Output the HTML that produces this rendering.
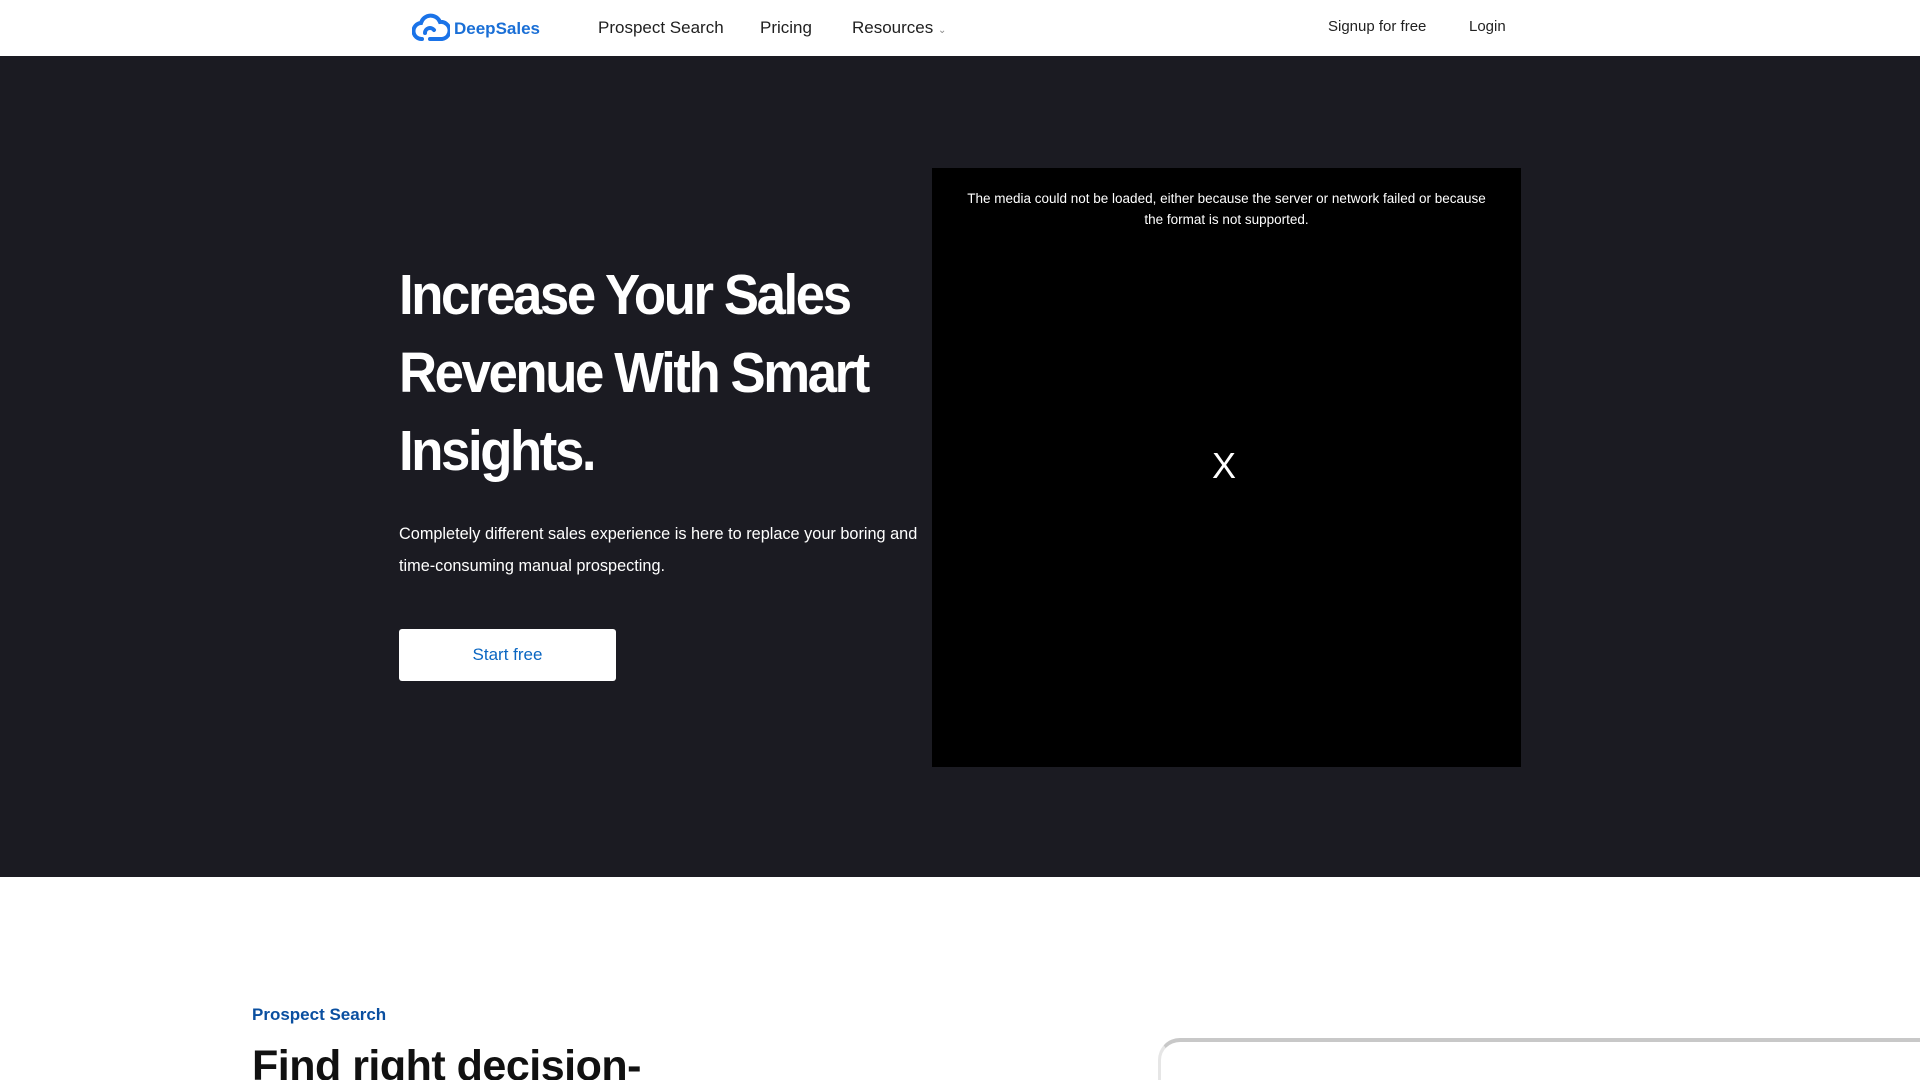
<!DOCTYPE html>
<html style="width:1920px;height:1080px;overflow:hidden"><head><meta charset="utf-8"><style>
*{margin:0;padding:0;box-sizing:border-box}
body{width:1920px;height:1080px;overflow:hidden;background:#fff;font-family:"Liberation Sans",sans-serif;position:relative}
.abs{position:absolute;white-space:nowrap}
nav{position:absolute;left:0;top:0;width:1920px;height:56px;background:#fff}
.hero{position:absolute;left:0;top:56px;width:1920px;height:821px;background:#1b1b22}
.nl{font-size:17px;color:#1f1f1f;top:18px}
h1{position:absolute;left:399px;top:256px;color:#fff;font-size:57px;line-height:78px;letter-spacing:-2.6px;font-weight:bold;transform:scaleX(.925);transform-origin:left top;white-space:nowrap}
</style></head><body>
<nav>
<svg class="abs" style="left:412px;top:13px" width="38" height="30" viewBox="0 0 38 30"><path d="M10 26 A8 8 0 0 1 9 10 A10 10 0 0 1 28 9 A8 8 0 0 1 30 26 L18 26" fill="none" stroke="#1a73e8" stroke-width="4" stroke-linecap="round"/><path d="M13 20 A5 5 0 0 1 22 17" fill="none" stroke="#1a73e8" stroke-width="4" stroke-linecap="round"/></svg>
<div class="abs" style="left:454px;top:19px;font-size:17px;font-weight:bold;color:#1a6fd6">DeepSales</div>
<div class="abs nl" style="left:598px">Prospect Search</div>
<div class="abs nl" style="left:760px">Pricing</div>
<div class="abs nl" style="left:852px">Resources <span style="font-size:10px;color:#888">&#8964;</span></div>
<div class="abs" style="left:1328px;top:18px;font-size:15px;color:#222">Signup for free</div>
<div class="abs" style="left:1469px;top:18px;font-size:15px;color:#222">Login</div>
</nav>
<div class="hero"></div>
<h1>Increase Your Sales<br>Revenue With Smart<br>Insights.</h1>
<div class="abs" style="left:399px;top:518px;color:#fff;font-size:16.3px;line-height:32px">Completely different sales experience is here to replace your boring and<br>time-consuming manual prospecting.</div>
<div class="abs" style="left:399px;top:629px;width:217px;height:52px;background:#fff;border-radius:3px;color:#0a66c2;font-size:17px;line-height:52px;text-align:center">Start free</div>
<div class="abs" style="left:932px;top:168px;width:589px;height:599px;background:#000"></div>
<div class="abs" style="left:932px;top:188px;width:589px;text-align:center;color:#fff;font-size:13.5px;line-height:21px;white-space:normal;padding:0 24px">The media could not be loaded, either because the server or network failed or because the format is not supported.</div>
<div class="abs" style="left:1212px;top:445px;color:#fff;font-size:36px">X</div>
<div class="abs" style="left:252px;top:1005px;color:#0a4fa0;font-size:17px;font-weight:bold">Prospect Search</div>
<div class="abs" style="left:252px;top:1042px;color:#111;font-size:43px;font-weight:bold;letter-spacing:-.5px">Find right decision-</div>
<div class="abs" style="left:1158px;top:1038px;width:762px;height:42px;border-top:4px solid #c8c8c8;border-left:3px solid #e6e6e6;border-radius:22px 0 0 0"></div>
</body></html>
